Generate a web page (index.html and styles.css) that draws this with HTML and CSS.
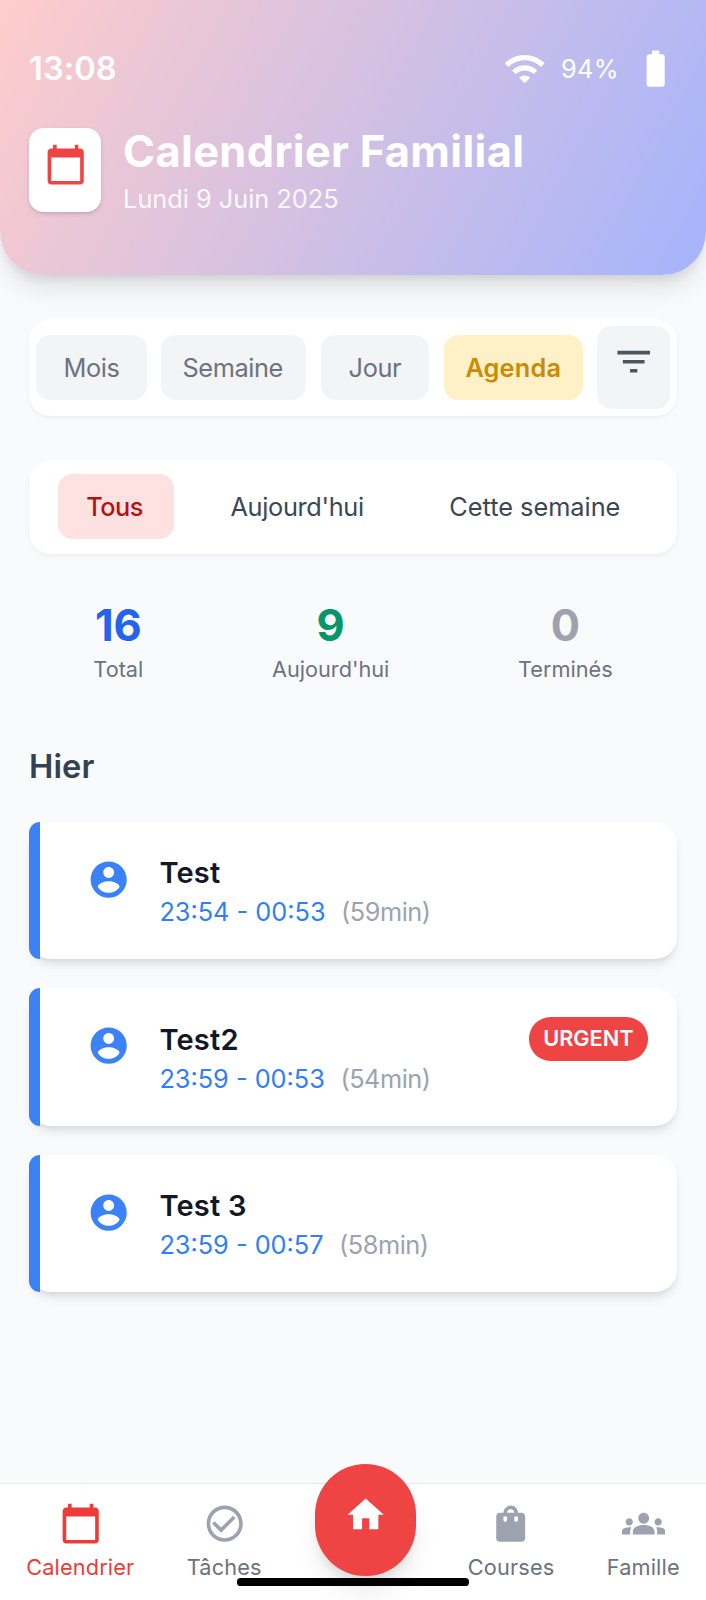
FILE: index.html
```html
<!DOCTYPE html>
<html lang="fr">
<head>
<meta charset="utf-8">
<title>Calendrier Familial</title>
<link rel="stylesheet" href="styles.css">
</head>
<body>
<div class="app">
  <header class="header">
    <div class="status">
      <span class="clock">13:08</span>
      <div class="status-right">
        <svg class="icon" viewBox="0 0 24 24"><path d="M1 9l2 2c4.97-4.97 13.03-4.97 18 0l2-2C16.93 2.93 7.08 2.93 1 9zm8 8l3 3 3-3c-1.65-1.66-4.34-1.66-6 0zm-4-4l2 2c2.76-2.76 7.24-2.76 10 0l2-2C15.14 9.14 8.87 9.14 5 13z"/></svg>
        <span class="battery">94%</span>
        <svg class="icon" viewBox="0 0 24 24"><path d="M15.67 4H14V2h-4v2H8.33C7.6 4 7 4.6 7 5.33v15.33C7 21.4 7.6 22 8.33 22h7.33c.74 0 1.34-.6 1.34-1.33V5.33C17 4.6 16.4 4 15.67 4z"/></svg>
      </div>
    </div>
    <div class="brand">
      <div class="logo">
        <svg class="icon" viewBox="0 0 24 24"><path d="M20 3h-1V1h-2v2H7V1H5v2H4c-1.1 0-2 .9-2 2v16c0 1.1.9 2 2 2h16c1.1 0 2-.9 2-2V5c0-1.1-.9-2-2-2zm0 18H4V8h16v13z"/></svg>
      </div>
      <div>
        <h1 class="title">Calendrier Familial</h1>
        <p class="subtitle">Lundi 9 Juin 2025</p>
      </div>
    </div>
  </header>

  <main class="main">
    <div class="panel views">
      <button class="chip mois">Mois</button>
      <button class="chip semaine">Semaine</button>
      <button class="chip jour">Jour</button>
      <button class="chip chip-active">Agenda</button>
      <button class="filter" aria-label="Filtrer">
        <svg class="icon" viewBox="0 0 24 24"><path d="M10 18h4v-2h-4v2zM3 6v2h18V6H3zm3 7h12v-2H6v2z"/></svg>
      </button>
    </div>

    <div class="panel periods">
      <button class="period period-active">Tous</button>
      <button class="period">Aujourd'hui</button>
      <button class="period week">Cette semaine</button>
    </div>

    <div class="stats">
      <div class="stat"><div class="value blue">16</div><div class="label">Total</div></div>
      <div class="stat"><div class="value green">9</div><div class="label">Aujourd'hui</div></div>
      <div class="stat"><div class="value gray">0</div><div class="label">Terminés</div></div>
    </div>

    <h2 class="day">Hier</h2>
    <div class="events">
      <article class="event">
        <svg class="icon" viewBox="0 0 24 24"><path d="M12 2C6.48 2 2 6.48 2 12s4.48 10 10 10 10-4.48 10-10S17.52 2 12 2zm0 3c1.66 0 3 1.34 3 3s-1.34 3-3 3-3-1.34-3-3 1.34-3 3-3zm0 14.2c-2.5 0-4.71-1.28-6-3.22.03-1.99 4-3.08 6-3.08 1.99 0 5.97 1.09 6 3.08-1.29 1.94-3.5 3.22-6 3.22z"/></svg>
        <div class="info">
          <h3 class="name">Test</h3>
          <p class="time">23:54 - 00:53<span class="duration">(59min)</span></p>
        </div>
      </article>
      <article class="event">
        <svg class="icon" viewBox="0 0 24 24"><path d="M12 2C6.48 2 2 6.48 2 12s4.48 10 10 10 10-4.48 10-10S17.52 2 12 2zm0 3c1.66 0 3 1.34 3 3s-1.34 3-3 3-3-1.34-3-3 1.34-3 3-3zm0 14.2c-2.5 0-4.71-1.28-6-3.22.03-1.99 4-3.08 6-3.08 1.99 0 5.97 1.09 6 3.08-1.29 1.94-3.5 3.22-6 3.22z"/></svg>
        <div class="info">
          <h3 class="name">Test2</h3>
          <p class="time">23:59 - 00:53<span class="duration">(54min)</span></p>
        </div>
        <span class="urgent">URGENT</span>
      </article>
      <article class="event">
        <svg class="icon" viewBox="0 0 24 24"><path d="M12 2C6.48 2 2 6.48 2 12s4.48 10 10 10 10-4.48 10-10S17.52 2 12 2zm0 3c1.66 0 3 1.34 3 3s-1.34 3-3 3-3-1.34-3-3 1.34-3 3-3zm0 14.2c-2.5 0-4.71-1.28-6-3.22.03-1.99 4-3.08 6-3.08 1.99 0 5.97 1.09 6 3.08-1.29 1.94-3.5 3.22-6 3.22z"/></svg>
        <div class="info">
          <h3 class="name">Test 3</h3>
          <p class="time">23:59 - 00:57<span class="duration">(58min)</span></p>
        </div>
      </article>
    </div>
  </main>

  <nav class="nav">
    <a class="tab tab-active">
      <svg class="icon" viewBox="0 0 24 24"><path d="M20 3h-1V1h-2v2H7V1H5v2H4c-1.1 0-2 .9-2 2v16c0 1.1.9 2 2 2h16c1.1 0 2-.9 2-2V5c0-1.1-.9-2-2-2zm0 18H4V8h16v13z"/></svg>
      <span class="tab-label">Calendrier</span>
    </a>
    <a class="tab">
      <svg class="icon" viewBox="0 0 24 24"><path d="M16.59 7.58L10 14.17l-3.59-3.58L5 12l5 5 8-8zM12 2C6.48 2 2 6.48 2 12s4.48 10 10 10 10-4.48 10-10S17.52 2 12 2zm0 18c-4.42 0-8-3.58-8-8s3.58-8 8-8 8 3.58 8 8-3.58 8-8 8z"/></svg>
      <span class="tab-label">Tâches</span>
    </a>
    <a class="home" aria-label="Accueil">
      <svg class="icon" viewBox="0 0 24 24"><path d="M10 20v-6h4v6h5v-8h3L12 3 2 12h3v8z"/></svg>
    </a>
    <a class="tab">
      <svg class="icon" viewBox="0 0 24 24"><path d="M18 6h-2c0-2.21-1.79-4-4-4S8 3.79 8 6H6c-1.1 0-2 .9-2 2v12c0 1.1.9 2 2 2h12c1.1 0 2-.9 2-2V8c0-1.1-.9-2-2-2zm-8 4c0 .55-.45 1-1 1s-1-.45-1-1V8h2v2zm2-6c1.1 0 2 .9 2 2h-4c0-1.1.9-2 2-2zm4 6c0 .55-.45 1-1 1s-1-.45-1-1V8h2v2z"/></svg>
      <span class="tab-label">Courses</span>
    </a>
    <a class="tab">
      <svg class="icon" viewBox="0 0 24 24"><path d="M12 12.75c1.63 0 3.07.39 4.24.9 1.08.48 1.76 1.56 1.76 2.73V18H6v-1.61c0-1.18.68-2.26 1.76-2.73 1.17-.52 2.61-.91 4.24-.91zM4 13c1.1 0 2-.9 2-2s-.9-2-2-2-2 .9-2 2 .9 2 2 2zm1.13 1.1c-.37-.06-.74-.1-1.13-.1-.99 0-1.93.21-2.78.58C.48 14.9 0 15.62 0 16.43V18h4.5v-1.61c0-.83.23-1.61.63-2.29zM20 13c1.1 0 2-.9 2-2s-.9-2-2-2-2 .9-2 2 .9 2 2 2zm4 3.43c0-.81-.48-1.53-1.22-1.85-.85-.37-1.79-.58-2.78-.58-.39 0-.76.04-1.13.1.4.68.63 1.46.63 2.29V18H24v-1.57zM12 6c1.66 0 3 1.34 3 3s-1.34 3-3 3-3-1.34-3-3 1.34-3 3-3z"/></svg>
      <span class="tab-label">Famille</span>
    </a>
    <div class="indicator"></div>
  </nav>
</div>
</body>
</html>
```
FILE: styles.css
```css
* { box-sizing: border-box; margin: 0; padding: 0; }
body { font-family: Inter, sans-serif; background: #f9fafb; color: #111827; }
button { border: 0; font: inherit; white-space: nowrap; }
.app { height: 1600px; display: flex; flex-direction: column; overflow: hidden; background: #f9fafc; }
.icon { display: block; width: 43.4px; height: 43.4px; fill: currentColor; flex: none; }

.header {
  height: 275px; padding: 47px 29px 0; color: #fff;
  border-radius: 0 0 43.4px 43.4px;
  background: linear-gradient(118deg, #ffcccb 0%, #a5b4fc 100%);
  box-shadow: 0 18px 27px -5px rgba(0,0,0,.1), 0 7px 11px -4px rgba(0,0,0,.1);
}
.status { display: flex; justify-content: space-between; align-items: center; height: 43.4px; }
.clock { font-size: 32.6px; line-height: 40px; font-weight: 600; margin-top: -2px; letter-spacing: .1px; }
.status-right { display: flex; align-items: center; gap: 14.5px; }
.battery { width: 58px; font-size: 25.3px; font-weight: 400; letter-spacing: .3px; }
.brand { display: flex; gap: 21.7px; margin-top: 38px; }
.logo {
  width: 72.4px; height: 84px; padding: 14.5px; border-radius: 14.5px;
  background: #fff; color: #ef4444;
  box-shadow: 0 2px 5px rgba(0,0,0,.1), 0 2px 3px -1px rgba(0,0,0,.1);
}
.title { font-size: 43.4px; line-height: 50px; font-weight: 700; margin-top: -2px; letter-spacing: .35px; }
.subtitle { font-size: 25.3px; line-height: 36px; margin-top: 5px; opacity: .9; }

.main { flex: 1; padding: 43.5px 29px 0; }
.panel { display: flex; background: #fff; border-radius: 21.7px; box-shadow: 0 2px 4px rgba(0,0,0,.05); }
.views { height: 97.5px; padding: 7.2px; align-items: center; gap: 14.5px; }
.chip { height: 65px; padding: 0; border-radius: 14.5px; background: #f3f4f6; color: #6b7280; font-size: 25.3px; letter-spacing: -.4px; }
.mois { width: 110.6px; }
.semaine { width: 145px; padding-right: 2px; }
.jour { width: 108.6px; }
.chip-active { width: 139.4px; background: #fef1c7; color: #ca8a04; font-weight: 600; letter-spacing: .2px; }
.filter { width: 72.4px; height: 83px; margin-left: auto; padding: 14.5px; border-radius: 14.5px; background: #f3f4f6; color: #4b5563; display: flex; align-items: flex-start; }
.periods { height: 94px; margin-top: 44.2px; padding: 14.2px 29px; gap: 27.5px; }
.period { flex: none; height: 65px; padding: 0 29px; border-radius: 14.5px; background: transparent; color: #3b4756; font-size: 25.3px; letter-spacing: -.33px; }
.week { letter-spacing: 0; }
.period-active { width: 116px; padding: 0 3px 0 0; background: #fee2e2; color: #b91010; font-weight: 500; letter-spacing: -.5px; }

.stats { display: flex; justify-content: space-around; margin-top: 42.3px; text-align: center; }
.value { font-size: 43.4px; line-height: 58px; font-weight: 700; }
.blue { color: #2563eb; }
.green { color: #059669; }
.gray { color: #9ca3af; }
.label { margin-top: 1px; font-size: 21.7px; line-height: 29px; color: #6b7280; }

.day { margin-top: 57px; font-size: 32.6px; line-height: 50.7px; font-weight: 600; color: #334155; letter-spacing: .15px; }
.events { display: flex; flex-direction: column; gap: 29.1px; margin-top: 29.6px; }
.event {
  position: relative; display: flex; align-items: flex-start; height: 137.4px;
  padding: 29px 29px 0 58px; border-radius: 21.7px; background: #fff;
  box-shadow: 0 7px 11px -2px rgba(0,0,0,.1), 0 4px 7px -4px rgba(0,0,0,.1);
}
.event::before { content: ""; position: absolute; left: 0; top: 0; bottom: 0; width: 10.9px; border-radius: 10.9px 0 0 10.9px; background: #3b82f6; }
.event .icon { color: #3b82f6; margin-top: 7px; }
.info { margin-left: 29px; flex: 1; padding-top: .6px; }
.name { font-size: 29px; line-height: 43px; font-weight: 600; color: #111827; letter-spacing: .2px; }
.time { font-size: 25.3px; line-height: 36px; color: #2f80f7; }
.duration { margin-left: 15.5px; color: #9ca3af; letter-spacing: -.45px; }
.urgent { padding: 6.9px 14.5px 7.5px; border-radius: 21.7px; background: #ef4444; color: #fff; font-size: 21.7px; line-height: 29px; font-weight: 600; }

.nav {
  position: relative; display: flex; justify-content: space-around; align-items: flex-start;
  height: 117.4px; padding-top: 18.4px; background: #fff; border-top: 1.8px solid #e5e7eb;
}
.tab { display: flex; flex-direction: column; align-items: center; color: #9ca3af; }
.tab-label { margin-top: 7.8px; font-size: 21.7px; line-height: 29px; color: #6b7280; letter-spacing: .16px; }
.tab-active, .tab-active .tab-label { color: #ef3a3a; }
.home {
  width: 101.4px; height: 112px; margin: -38.3px -.5px 0 .5px; padding: 29px; border-radius: 50.7px;
  background: #ef4444; color: #fff;
  box-shadow: 0 18px 27px -5px rgba(0,0,0,.1), 0 7px 11px -4px rgba(0,0,0,.1);
}
.indicator { position: absolute; left: 237px; bottom: 14.5px; width: 232px; height: 7.3px; border-radius: 3.6px; background: #000; }
```
